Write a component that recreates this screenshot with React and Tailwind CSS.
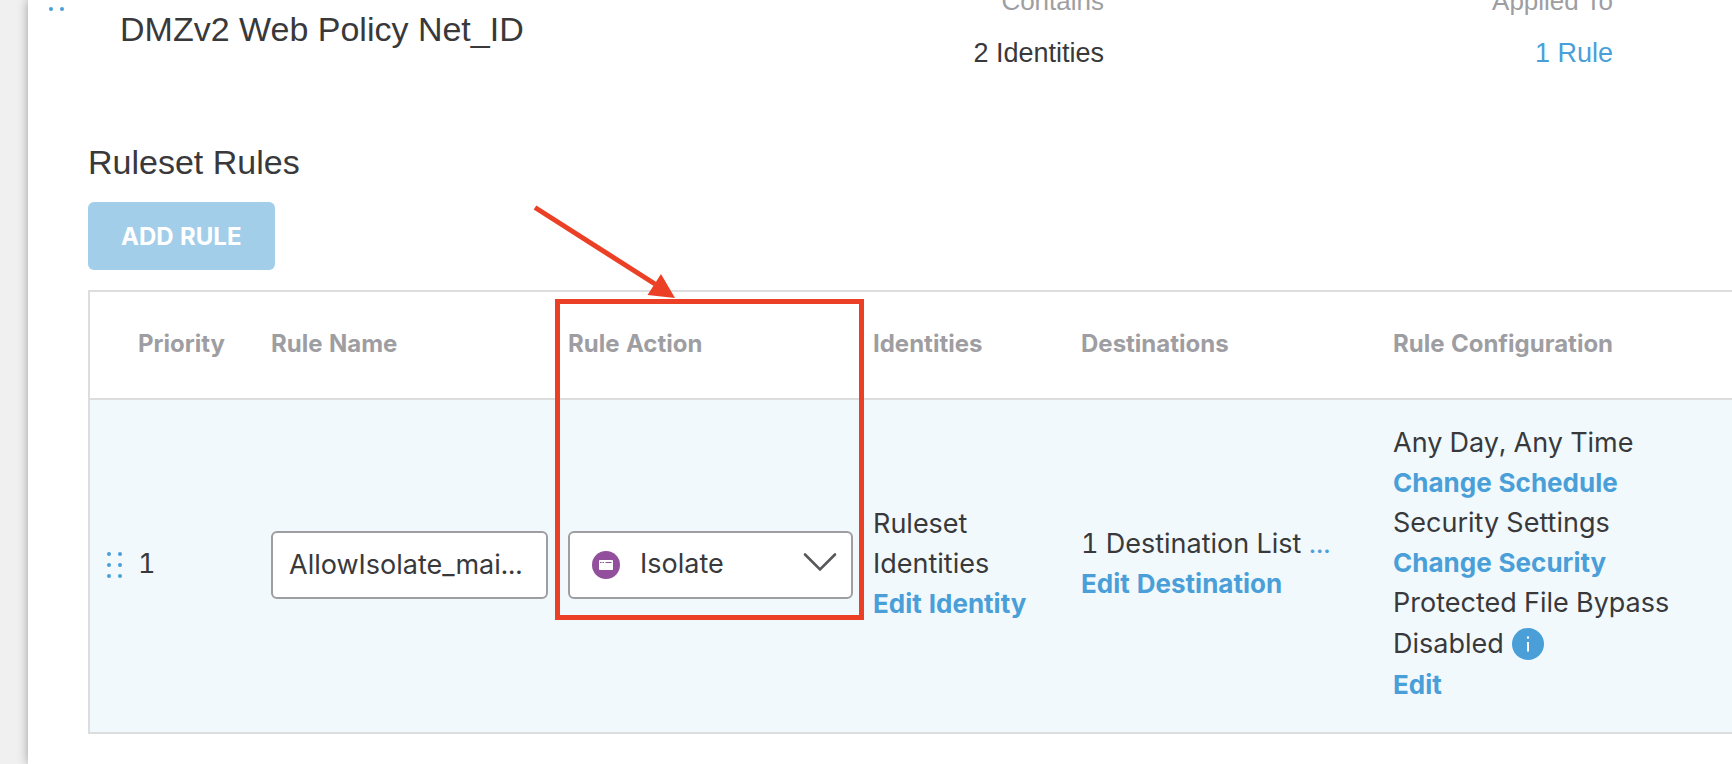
import React, { useState } from 'react';

const DragHandle = () => (
  <svg width="16" height="28" viewBox="0 0 16 28" fill="#4a9fd8" aria-hidden="true">
    {[3, 14, 25].map((y) => (
      <g key={y}>
        <circle cx="3" cy={y} r="2" />
        <circle cx="14" cy={y} r="2" />
      </g>
    ))}
  </svg>
);

const IsolateIcon = () => (
  <svg width="28" height="28" viewBox="0 0 28 28" aria-hidden="true">
    <circle cx="14" cy="14" r="14" fill="#924f9b" />
    <rect x="7" y="9" width="14" height="10" rx="1" fill="#fff" />
    <path d="M8 11.5h1.5M10.5 11.5h1.5M13.5 11.5h6" stroke="#924f9b" strokeWidth="1" />
  </svg>
);

const InfoIcon = () => (
  <svg width="32" height="32" viewBox="0 0 32 32" aria-hidden="true">
    <circle cx="16" cy="16" r="16" fill="#4a9fd8" />
    <circle cx="16" cy="9.5" r="1.2" fill="#fff" />
    <path d="M16 14v9.5" stroke="#fff" strokeWidth="2" />
  </svg>
);

const Stat = ({ label, children }) => (
  <div className="mt-3 text-right text-[27px] leading-[30px]">
    <div className="text-[26px] text-[#9e9ea2]">{label}</div>
    <div className="mt-[22px]">{children}</div>
  </div>
);

const ActionLink = ({ children }) => (
  <a href="#" className="block text-[26px] font-bold text-[#4a9fd8]">
    {children}
  </a>
);

const columns = ['Priority', 'Rule Name', 'Rule Action', 'Identities', 'Destinations', 'Rule Configuration'];

const App = () => {
  const [ruleName, setRuleName] = useState('AllowIsolate_mai...');
  const [action, setAction] = useState('isolate');

  return (
    <div className="min-h-screen overflow-hidden bg-[#f0f0f0] pl-7 font-['Inter','Liberation_Sans',sans-serif] text-[#39393b] tabular-nums">
      <main className="flow-root min-h-screen bg-white pl-[60px] shadow-[0_0_10px_rgba(0,0,0,0.35)]">
        {/* Ruleset summary, partly scrolled out of view */}
        <header className="-ml-10 -mt-[26px] flex items-start pr-[119px] font-['Liberation_Sans',sans-serif]">
          <div className="mt-2.5">
            <DragHandle />
          </div>
          <h1 className="ml-14 mt-[31px] flex-1 text-[34px] leading-[48px]">DMZv2 Web Policy Net_ID</h1>
          <Stat label="Contains">2 Identities</Stat>
          <div className="w-[509px]">
            <Stat label="Applied To">
              <a href="#" className="text-[#4a9fd8]">1 Rule</a>
            </Stat>
          </div>
        </header>

        <section className="pt-[70px]">
          <h2 className="font-['Liberation_Sans',sans-serif] text-[34px] leading-[48px]">Ruleset Rules</h2>
          <button type="button" className="mt-4 h-[68px] rounded-md bg-[#a3cee9] px-[33px] pt-0.5 text-2xl font-bold text-white">
            ADD RULE
          </button>

          <div className="relative mt-5">
            <table className="w-full table-fixed border-2 border-r-0 border-[#dcddde] text-left">
              <colgroup>
                <col className="w-[49px]" />
                <col className="w-[133px]" />
                <col className="w-[297px]" />
                <col className="w-[305px]" />
                <col className="w-[208px]" />
                <col className="w-[312px]" />
                <col />
              </colgroup>
              <thead>
                <tr className="h-[108px] border-b-2 border-[#dcddde] text-2xl text-[#9e9ea2]">
                  <th aria-label="Reorder" />
                  {columns.map((name) => (
                    <th key={name} scope="col" className="pb-0.5 font-bold">{name}</th>
                  ))}
                </tr>
              </thead>
              <tbody>
                <tr className="bg-[#f1f9fd] text-[27px] leading-10">
                  <td className="pb-0.5">
                    <div className="flex justify-center"><DragHandle /></div>
                  </td>
                  <td className="pb-1">1</td>
                  <td className="pb-0.5 pr-5">
                    <input
                      type="text"
                      aria-label="Rule name"
                      value={ruleName}
                      onChange={(e) => setRuleName(e.target.value)}
                      className="block h-[68px] w-full rounded-md border-2 border-[#9e9ea2] bg-white px-4 pb-0.5"
                    />
                  </td>
                  <td className="pb-0.5 pr-5">
                    <div className="relative">
                      <select
                        aria-label="Rule action"
                        value={action}
                        onChange={(e) => setAction(e.target.value)}
                        className="block h-[68px] w-full appearance-none rounded-md border-2 border-[#9e9ea2] bg-white pb-0.5 pl-[70px]"
                      >
                        <option value="isolate">Isolate</option>
                      </select>
                      <span className="pointer-events-none absolute left-6 top-5">
                        <IsolateIcon />
                      </span>
                      <svg
                        className="pointer-events-none absolute right-4 top-5"
                        width="34"
                        height="22"
                        viewBox="0 0 34 22"
                        fill="none"
                        stroke="#58585b"
                        strokeWidth="2.6"
                        strokeLinecap="round"
                        aria-hidden="true"
                      >
                        <path d="M2 3.5 17 18.5 32 3.5" />
                      </svg>
                    </div>
                  </td>
                  <td className="pb-1">
                    <div>Ruleset</div>
                    <div>Identities</div>
                    <ActionLink>Edit Identity</ActionLink>
                  </td>
                  <td className="pb-1">
                    <div>
                      1 Destination List <a href="#" className="text-[#4a9fd8]">...</a>
                    </div>
                    <ActionLink>Edit Destination</ActionLink>
                  </td>
                  <td className="pb-[27px] pt-[23px]">
                    <div>Any Day, Any Time</div>
                    <ActionLink>Change Schedule</ActionLink>
                    <div>Security Settings</div>
                    <ActionLink>Change Security</ActionLink>
                    <div>Protected File Bypass</div>
                    <div className="flex h-[42px] items-center gap-2">
                      Disabled <InfoIcon />
                    </div>
                    <ActionLink>Edit</ActionLink>
                  </td>
                </tr>
              </tbody>
            </table>

            {/* Callout around the Rule Action column */}
            <div className="pointer-events-none absolute left-[467px] top-[9px] h-[321px] w-[309px] border-[5px] border-[#eb4025]" />
            <svg
              className="pointer-events-none absolute -top-[88px] left-[440px]"
              width="156"
              height="100"
              viewBox="0 0 156 100"
              aria-hidden="true"
            >
              <path d="M7 5.5 127 82" stroke="#eb4025" strokeWidth="5" />
              <path d="M147 96 119.500 93 133 72Z" fill="#eb4025" />
            </svg>
          </div>
        </section>
      </main>
    </div>
  );
};

export default App;
